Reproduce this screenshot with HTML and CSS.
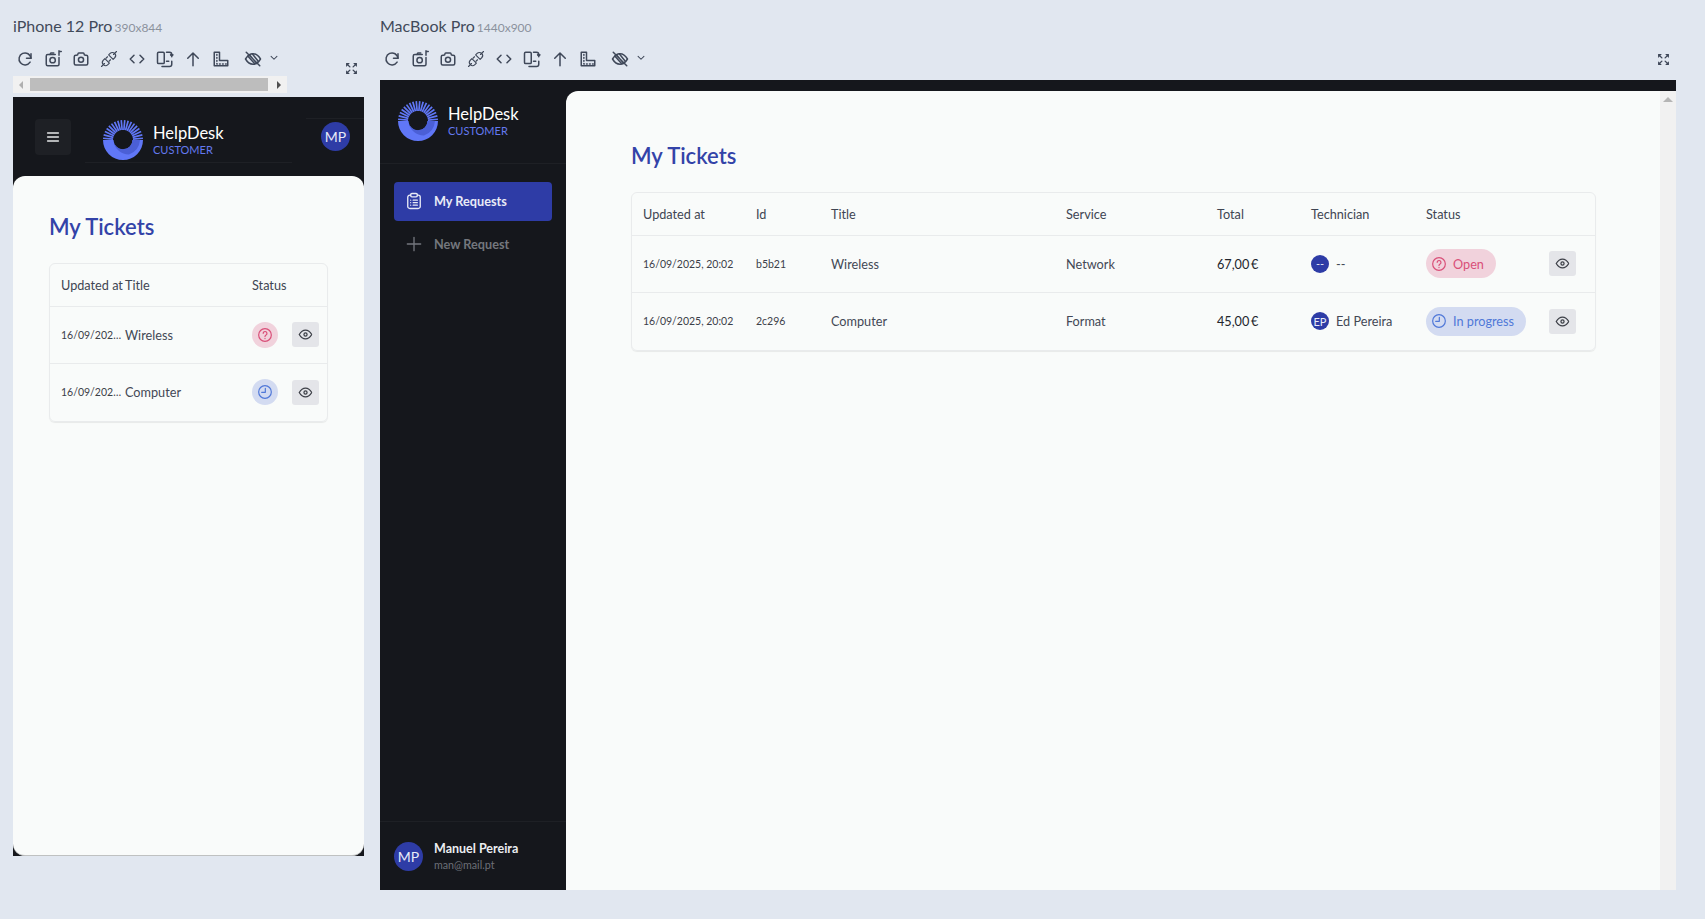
FILE: index.html
```html
<!DOCTYPE html>
<html lang="en">
<head>
<meta charset="utf-8">
<title>Responsive viewer</title>
<link rel="stylesheet" href="styles.css">
</head>
<body>
<svg class="defs" width="0" height="0" aria-hidden="true">
  <defs>
    <symbol id="i-refresh" viewBox="0 0 24 24"><path d="M20 11a8 8 0 1 0-1.2 5.2"/><path d="M20 5v6h-6"/></symbol>
    <symbol id="i-camera-new" viewBox="0 0 24 24"><path d="M15 6H5a2 2 0 0 0-2 2v11a2 2 0 0 0 2 2h13a2 2 0 0 0 2-2V10"/><path d="M8 6l1-2h4"/><circle cx="11.5" cy="13.5" r="3.6"/><path d="M20 1v6M20 2h3"/></symbol>
    <symbol id="i-camera" viewBox="0 0 24 24"><path d="M5 7h1a2 2 0 0 0 2-2 1 1 0 0 1 1-1h6a1 1 0 0 1 1 1 2 2 0 0 0 2 2h1a2 2 0 0 1 2 2v9a2 2 0 0 1-2 2H5a2 2 0 0 1-2-2V9a2 2 0 0 1 2-2"/><circle cx="12" cy="13" r="3.4"/></symbol>
    <symbol id="i-plug" viewBox="0 0 24 24"><path d="M2 22l4-4M22 2l-4 4M10 9l-2 2M14 13l-2 2"/><path d="M6.500 11.500l6 6-2 2a4 4 0 0 1-6-6z"/><path d="M17.500 12.500l-6-6 2-2a4 4 0 0 1 6 6z"/></symbol>
    <symbol id="i-code" viewBox="0 0 24 24"><path d="M8 7l-5 5 5 5M16 7l5 5-5 5"/></symbol>
    <symbol id="i-devices" viewBox="0 0 24 24"><rect x="2" y="3" width="9" height="15" rx="1.5"/><path d="M14 3h4a3 3 0 0 1 3 3v3M21 8l1.5-1.5M21 8l-1.500-1.500M8 22h10a3 3 0 0 0 3-3v-4M14 15h3"/></symbol>
    <symbol id="i-up" viewBox="0 0 24 24"><path d="M12 21V4M5 11l7-7 7 7"/></symbol>
    <symbol id="i-ruler" viewBox="0 0 24 24"><path d="M3 3h7v11h11v7H3z"/><path d="M6.500 6v12.500H19" stroke-dasharray="1 3"/></symbol>
    <symbol id="i-eye-off" viewBox="0 0 24 24"><path d="M2 12c3-5 6-7 10-7s7 2 10 7c-3 5-6 7-10 7s-7-2-10-7z"/><path d="M3 3l18 18M7 6l10 12M5 8l9 10M11 5l8 10"/></symbol>
    <symbol id="i-chevron" viewBox="0 0 24 24"><path d="M5 8l7 7 7-7"/></symbol>
    <symbol id="i-full" viewBox="0 0 24 24"><path d="M2 2h7L2 9zM22 2h-7l7 7zM2 22h7l-7-7zM22 22h-7l7-7z" class="filled"/><path d="M4 4l5 5M20 4l-5 5M4 20l5-5M20 20l-5-5"/></symbol>
    <symbol id="i-eye" viewBox="0 0 24 24"><circle cx="12" cy="12" r="2.500"/><path d="M22 12c-2.700 4.700-6 7-10 7s-7.300-2.300-10-7c2.700-4.700 6-7 10-7s7.300 2.300 10 7"/></symbol>
    <symbol id="i-help" viewBox="0 0 24 24"><circle cx="12" cy="12" r="9.500"/><path d="M9.300 9.500a2.800 2.800 0 1 1 4.200 2.500c-1 .6-1.500 1.200-1.500 2.200M12 17.200v.1"/></symbol>
    <symbol id="i-clock" viewBox="0 0 24 24"><circle cx="12" cy="12" r="9.500"/><path d="M12.500 6.500V12.500H7"/></symbol>
    <symbol id="i-clipboard" viewBox="0 0 24 24"><path d="M8 5H7a2.500 2.500 0 0 0-2.500 2.500v11A2.500 2.500 0 0 0 7 21h10a2.500 2.500 0 0 0 2.500-2.500v-11A2.500 2.500 0 0 0 17 5h-1"/><rect x="8" y="3" width="8" height="4" rx="1.500"/><path d="M8 11h.01M8 14h.01M8 17h.01M11 11h5M11 14h5M11 17h5"/></symbol>
    <symbol id="i-plus" viewBox="0 0 24 24"><path d="M12 4v16M4 12h16"/></symbol>
    <symbol id="i-menu" viewBox="0 0 24 24"><path d="M4 6h16M4 12h16M4 18h16"/></symbol>
    <symbol id="i-logo" viewBox="0 0 40 40">
      <path class="logo-base" d="M0 20h10.500a9.500 9.500 0 0 0 19 0H40a20 20 0 0 1-40 0z"/>
      <path class="logo-shade" d="M10.800 22a9.500 9.500 0 0 0 18.700-2H37a17 17 0 0 1-11 14.500 15 15 0 0 1-15.200-12.500z"/>
      <g class="logo-rays">
        <path d="M10 20H0" transform="rotate(5 20 20)"/>
        <path d="M10 20H0" transform="rotate(15 20 20)"/>
        <path d="M10 20H0" transform="rotate(25 20 20)"/>
        <path d="M10 20H0" transform="rotate(35 20 20)"/>
        <path d="M10 20H0" transform="rotate(45 20 20)"/>
        <path d="M10 20H0" transform="rotate(55 20 20)"/>
        <path d="M10 20H0" transform="rotate(65 20 20)"/>
        <path d="M10 20H0" transform="rotate(75 20 20)"/>
        <path d="M10 20H0" transform="rotate(85 20 20)"/>
        <path d="M10 20H0" transform="rotate(95 20 20)"/>
        <path d="M10 20H0" transform="rotate(105 20 20)"/>
        <path d="M10 20H0" transform="rotate(115 20 20)"/>
        <path d="M10 20H0" transform="rotate(125 20 20)"/>
        <path d="M10 20H0" transform="rotate(135 20 20)"/>
        <path d="M10 20H0" transform="rotate(145 20 20)"/>
        <path d="M10 20H0" transform="rotate(155 20 20)"/>
        <path d="M10 20H0" transform="rotate(165 20 20)"/>
        <path d="M10 20H0" transform="rotate(175 20 20)"/>
      </g>
    </symbol>
  </defs>
</svg>

<section class="device device-phone">
  <h2 class="device-label">iPhone 12 Pro <small>390x844</small></h2>
  <div class="toolbar-row">
    <div class="toolbar">
      <svg class="tool"><use href="#i-refresh"/></svg>
      <svg class="tool"><use href="#i-camera-new"/></svg>
      <svg class="tool"><use href="#i-camera"/></svg>
      <svg class="tool thin"><use href="#i-plug"/></svg>
      <svg class="tool"><use href="#i-code"/></svg>
      <svg class="tool"><use href="#i-devices"/></svg>
      <svg class="tool"><use href="#i-up"/></svg>
      <svg class="tool"><use href="#i-ruler"/></svg>
      <svg class="tool tool-eye"><use href="#i-eye-off"/></svg>
      <svg class="tool-caret"><use href="#i-chevron"/></svg>
    </div>
    <svg class="tool-full tool-full-low"><use href="#i-full"/></svg>
  </div>
  <div class="h-scroll"><span class="arrow-left"></span><span class="h-thumb"></span><span class="arrow-right"></span></div>
  <div class="screen screen-phone">
    <header class="phone-head">
      <button class="menu-btn" type="button"><svg class="menu-icon"><use href="#i-menu"/></svg></button>
      <div class="brand brand-phone">
        <svg class="logo"><use href="#i-logo"/></svg>
        <div class="brand-text"><strong>HelpDesk</strong><span>CUSTOMER</span></div>
      </div>
      <span class="avatar avatar-md avatar-head">MP</span>
    </header>
    <main class="phone-card">
      <h1 class="page-title">My Tickets</h1>
      <div class="table-wrap">
        <table class="tickets tickets-phone">
          <colgroup><col class="pc1"><col class="pc2"><col class="pc3"><col class="pc4"></colgroup>
          <thead><tr><th>Updated at</th><th class="tight">Title</th><th>Status</th><th></th></tr></thead>
          <tbody>
            <tr>
              <td class="date clip">16/09/2025, 20:02</td><td class="tight">Wireless</td>
              <td><span class="status-dot open"><svg class="status-icon"><use href="#i-help"/></svg></span></td>
              <td><button class="eye-btn" type="button"><svg class="eye-icon"><use href="#i-eye"/></svg></button></td>
            </tr>
            <tr>
              <td class="date clip">16/09/2025, 20:02</td><td class="tight">Computer</td>
              <td><span class="status-dot progress"><svg class="status-icon"><use href="#i-clock"/></svg></span></td>
              <td><button class="eye-btn" type="button"><svg class="eye-icon"><use href="#i-eye"/></svg></button></td>
            </tr>
          </tbody>
        </table>
      </div>
    </main>
  </div>
</section>

<section class="device device-desktop">
  <h2 class="device-label">MacBook Pro <small>1440x900</small></h2>
  <div class="toolbar-row">
    <div class="toolbar">
      <svg class="tool"><use href="#i-refresh"/></svg>
      <svg class="tool"><use href="#i-camera-new"/></svg>
      <svg class="tool"><use href="#i-camera"/></svg>
      <svg class="tool thin"><use href="#i-plug"/></svg>
      <svg class="tool"><use href="#i-code"/></svg>
      <svg class="tool"><use href="#i-devices"/></svg>
      <svg class="tool"><use href="#i-up"/></svg>
      <svg class="tool"><use href="#i-ruler"/></svg>
      <svg class="tool tool-eye"><use href="#i-eye-off"/></svg>
      <svg class="tool-caret"><use href="#i-chevron"/></svg>
    </div>
    <svg class="tool-full"><use href="#i-full"/></svg>
  </div>
  <div class="screen screen-desktop">
    <aside class="sidebar">
      <div class="brand brand-side">
        <svg class="logo"><use href="#i-logo"/></svg>
        <div class="brand-text"><strong>HelpDesk</strong><span>CUSTOMER</span></div>
      </div>
      <nav class="nav">
        <a class="nav-item active"><svg class="nav-icon"><use href="#i-clipboard"/></svg>My Requests</a>
        <a class="nav-item"><svg class="nav-icon"><use href="#i-plus"/></svg>New Request</a>
      </nav>
      <div class="user">
        <span class="avatar avatar-md">MP</span>
        <div class="user-text"><strong>Manuel Pereira</strong><span>man@mail.pt</span></div>
      </div>
    </aside>
    <main class="desk-main">
      <div class="desk-content">
        <h1 class="page-title">My Tickets</h1>
        <div class="table-wrap">
          <table class="tickets tickets-desk">
            <colgroup><col class="c1"><col class="c2"><col class="c3"><col class="c4"><col class="c5"><col class="c6"><col class="c7"><col class="c8"></colgroup>
            <thead><tr><th>Updated at</th><th>Id</th><th>Title</th><th>Service</th><th>Total</th><th>Technician</th><th>Status</th><th></th></tr></thead>
            <tbody>
              <tr>
                <td class="date">16/09/2025, 20:02</td><td class="date">b5b21</td><td>Wireless</td><td>Network</td><td class="money">67,00 €</td>
                <td><span class="tech"><span class="avatar avatar-sm">--</span>--</span></td>
                <td><span class="pill open"><svg class="status-icon"><use href="#i-help"/></svg>Open</span></td>
                <td><button class="eye-btn" type="button"><svg class="eye-icon"><use href="#i-eye"/></svg></button></td>
              </tr>
              <tr>
                <td class="date">16/09/2025, 20:02</td><td class="date">2c296</td><td>Computer</td><td>Format</td><td class="money">45,00 €</td>
                <td><span class="tech"><span class="avatar avatar-sm">EP</span>Ed Pereira</span></td>
                <td><span class="pill progress"><svg class="status-icon"><use href="#i-clock"/></svg>In progress</span></td>
                <td><button class="eye-btn" type="button"><svg class="eye-icon"><use href="#i-eye"/></svg></button></td>
              </tr>
            </tbody>
          </table>
        </div>
      </div>
      <div class="v-scroll"><span class="arrow-up"></span></div>
    </main>
  </div>
</section>
</body>
</html>
```

FILE: styles.css
```css
* { box-sizing: border-box; }
html, body { margin: 0; height: 100%; }
body {
  display: flex;
  gap: 16px;
  height: 919px;
  padding-left: 13px;
  overflow: hidden;
  background: #e1e7f0;
  font-family: Lato, "Open Sans", sans-serif;
  color: #3a3f4b;
}
.defs { position: absolute; }
.device { display: flex; flex-direction: column; flex: none; }
.device-phone { width: 351px; }
.device-desktop { width: 1296px; }
.device-label {
  margin: 0;
  height: 45px;
  padding-top: 16px;
  font-size: 16px;
  line-height: 20px;
  font-weight: 400;
  color: #414a5a;
}
.device-label small { margin-left: -2px; font-size: 12px; color: #8b929d; }

.toolbar-row { display: flex; height: 31px; }
.device-desktop .toolbar-row { height: 35px; }
.toolbar { display: flex; align-items: flex-start; gap: 10px; padding: 5px 0 0 3px; }
.tool, .tool-caret, .tool-full {
  fill: none;
  stroke: #3f4859;
  stroke-width: 2;
  stroke-linecap: round;
  stroke-linejoin: round;
  flex: none;
}
.tool { width: 18px; height: 18px; }
.tool.thin { stroke-width: 1.5; }
.tool-eye { margin-left: 4px; }
.tool-caret { width: 10px; height: 10px; margin: 3px 0 0 -3px; stroke-width: 2.5; }
.tool-full { width: 13px; height: 13px; margin: 8px 6px 0 auto; stroke-width: 2.500; }
.tool-full-low { margin-top: 17px; }
.filled { fill: #3f4859; stroke: none; }

.h-scroll {
  display: flex;
  align-items: center;
  width: 274px;
  height: 17px;
  margin-bottom: 4px;
  background: #f1f1f1;
}
.h-thumb { width: 238px; height: 13px; margin: 0 9px 0 0; background: #bdbdbd; }
.arrow-left, .arrow-right { width: 0; height: 0; border-style: solid; border-color: transparent; border-width: 4px 0; }
.arrow-left { margin: 0 7px 0 6px; border-right: 4px solid #b0b0b0; }
.arrow-right { border-left: 4px solid #505050; }

.screen { background: #15171c; }
.screen-phone { display: flex; flex-direction: column; height: 759px; }
.screen-desktop { display: flex; height: 810px; }

.phone-head { position: relative; display: flex; align-items: center; height: 79px; padding: 0 14px 0 22px; flex: none; }
.phone-head::before { content: ""; position: absolute; left: 72px; width: 207px; top: 65px; border-top: 1px solid #1e2025; }
.phone-head::after { content: ""; position: absolute; right: 0; width: 58px; top: 21px; border-top: 1px solid #1e2025; }
.menu-btn { display: flex; align-items: center; justify-content: center; width: 36px; height: 36px; padding: 0; border: 0; border-radius: 4px; background: #1e2025; }
.menu-icon { width: 16px; height: 16px; fill: none; stroke: #e6e7e9; stroke-width: 2.4; stroke-linecap: round; }
.brand { display: flex; align-items: center; gap: 10px; }
.brand-phone { margin: 6px 0 0 32px; }
.logo { width: 40px; height: 40px; flex: none; }
.logo-base { fill: #6077f7; }
.logo-shade { fill: #4b5fd6; }
.logo-rays { fill: none; stroke: #6077f7; stroke-width: 1.700; }
.brand-text { display: flex; flex-direction: column; }
.brand-text strong { font-size: 16.500px; line-height: 19px; font-weight: 400; color: #fff; }
.brand-text span { font-size: 11px; line-height: 13px; color: #6479ef; }
.avatar {
  display: inline-flex;
  align-items: center;
  justify-content: center;
  flex: none;
  border-radius: 50%;
  background: #2e3ca6;
  color: #e8ebf8;
}
.avatar-md { width: 29px; height: 29px; font-size: 14px; }
.avatar-sm { width: 18px; height: 18px; font-size: 11px; }
.avatar-head { margin-left: auto; }

.phone-card {
  flex: 1;
  padding: 37px 36px 0;
  border-radius: 12px;
  border-bottom: 1px solid #bfc1c1;
  background: #f9fbfa;
}
.page-title {
  margin: 0 0 22px;
  font-size: 22px;
  line-height: 28px;
  font-weight: 600;
  color: #3343a8;
}
.table-wrap {
  border: 1px solid #e9ebec;
  border-radius: 6px;
  box-shadow: 0 1px 1px rgba(0, 0, 0, .07);
  overflow: hidden;
}
.tickets { width: 100%; border-collapse: collapse; table-layout: fixed; font-size: 12.700px; }
.tickets th { height: 42px; padding: 0 0 0 11px; font-weight: 400; text-align: left; white-space: nowrap; color: #404552; }
.tickets td { height: 57px; padding: 0 0 0 11px; border-top: 1px solid #e9ebec; color: #434855; }
.tickets tbody tr:last-child td { height: 58px; }
.tickets .tight { padding-left: 4px; }
.tickets .date { font-size: 10.500px; color: #3c4049; }
.tickets .clip { padding-right: 0; overflow: hidden; white-space: nowrap; text-overflow: ellipsis; }
.tickets .money { color: #23262d; word-spacing: -1.500px; }
.c1 { width: 113px; } .c2 { width: 75px; } .c3 { width: 235px; } .c4 { width: 151px; }
.c5 { width: 94px; } .c6 { width: 115px; } .c7 { width: 123px; } .c8 { width: 57px; }
.pc1 { width: 71px; } .pc2 { width: 120px; } .pc3 { width: 40px; } .pc4 { width: 46px; }

.tech { display: inline-flex; align-items: center; gap: 7px; }
.pill {
  display: inline-flex;
  align-items: center;
  gap: 6px;
  height: 29px;
  padding: 0 12px 0 5px;
  border-radius: 15px;
  white-space: nowrap;
}
.status-dot { display: flex; align-items: center; justify-content: center; width: 26px; height: 26px; border-radius: 50%; }
.open { background: #f1d2dc; color: #d94f78; }
.progress { background: #d3dbf1; color: #5078d8; }
.status-icon { width: 16px; height: 16px; fill: none; stroke: currentColor; stroke-width: 1.800; stroke-linecap: round; stroke-linejoin: round; flex: none; }
.eye-btn { display: flex; align-items: center; justify-content: center; width: 27px; height: 25px; padding: 0; border: 0; border-radius: 3px; background: #e4e5e9; }
.eye-icon { width: 15px; height: 15px; fill: none; stroke: #3c3f47; stroke-width: 2; }

.sidebar { display: flex; flex-direction: column; width: 186px; flex: none; }
.brand-side { height: 84px; padding: 0 0 1px 18px; border-bottom: 1px solid #1e2025; }
.nav { flex: 1; display: flex; flex-direction: column; gap: 4px; padding: 18px 14px 0; }
.nav-item {
  display: flex;
  align-items: center;
  gap: 10px;
  height: 39px;
  padding: 0 0 1px 10px;
  border-radius: 4px;
  font-size: 12.700px;
  font-weight: 700;
  color: #74777e;
}
.nav-item.active { background: #2e3ca6; color: #e9ebf6; }
.nav-icon { width: 20px; height: 20px; fill: none; stroke: currentColor; stroke-width: 1.600; stroke-linecap: round; stroke-linejoin: round; flex: none; }
.user { display: flex; align-items: center; gap: 11px; height: 69px; padding: 0 14px; border-top: 1px solid #1e2025; }
.user-text { display: flex; flex-direction: column; }
.user-text strong { font-size: 12.500px; line-height: 16px; font-weight: 700; color: #eceef2; }
.user-text span { font-size: 10.700px; line-height: 15px; color: #6d7078; }

.desk-main { display: flex; flex: 1; min-width: 0; margin-top: 11px; border-top-left-radius: 12px; background: #f9fbfa; overflow: hidden; }
.desk-content { flex: 1; padding: 51px 64px 0 65px; min-width: 0; }
.v-scroll { width: 16px; flex: none; padding: 6px 0 0 3px; background: #f1f1f1; }
.arrow-up { display: block; width: 0; height: 0; border: 5px solid transparent; border-top: 0; border-bottom: 5px solid #b5b5b5; }
```
